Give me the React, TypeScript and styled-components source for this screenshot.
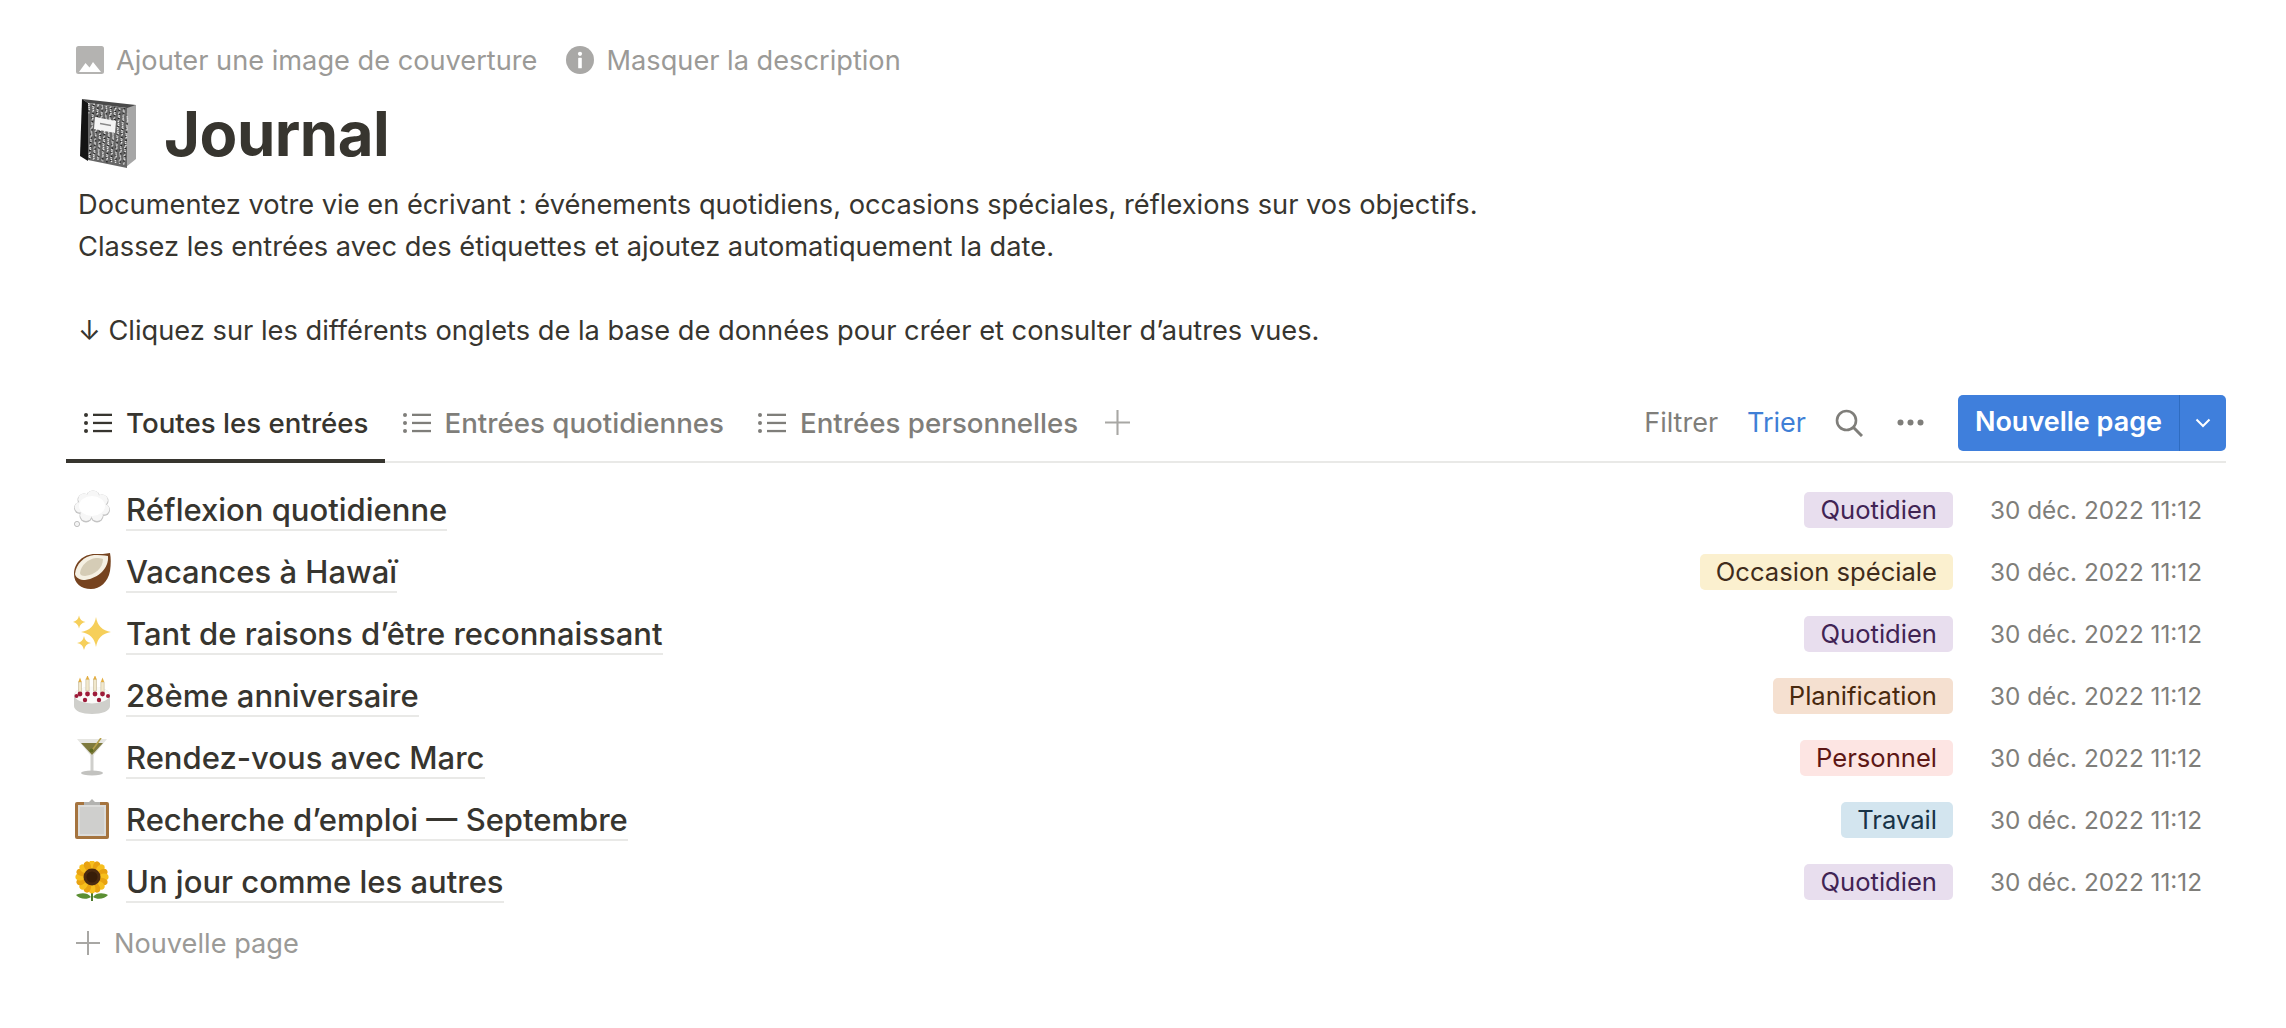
import React from "react";
import styled, { createGlobalStyle } from "styled-components";

const Global = createGlobalStyle`
  html, body { margin: 0; padding: 0; background: #fff; }
  body { font-family: Inter, "Liberation Sans", sans-serif; color: #37352f; }
`;

const Page = styled.div`
  width: 2286px;
  height: 1028px;
  box-sizing: border-box;
  padding: 38px 60px 0 66px;
  overflow: hidden;
`;
const Head = styled.header`
  padding-left: 10px;
`;
const TopActions = styled.div`
  display: flex;
  align-items: center;
  gap: 29px;
  height: 44px;
`;
const TopAction = styled.div`
  display: flex;
  align-items: center;
  gap: 12px;
  font-size: 27.2px;
  color: #9b9a97;
`;
const TitleRow = styled.div`
  display: flex;
  align-items: center;
  gap: 28px;
  height: 80px;
  margin-top: 12px;
`;
const NotebookSlot = styled.span`
  display: flex;
  margin-left: 4px;
`;
const Title = styled.h1`
  margin: 0;
  font-size: 61.7px;
  font-weight: 700;
  line-height: 80px;
  letter-spacing: -0.5px;
`;
const Description = styled.p`
  margin: 10px 0 0;
  padding-left: 2px;
  font-size: 27.25px;
  line-height: 42px;
  color: #37352f;
  white-space: pre-line;
`;
const Toolbar = styled.div`
  display: flex;
  align-items: stretch;
  justify-content: space-between;
  height: 70px;
  margin-top: 39px;
  border-bottom: 2px solid #e9e9e7;
`;
const Tabs = styled.div`
  display: flex;
  align-items: stretch;
`;
const Tab = styled.div<{ $active?: boolean }>`
  display: flex;
  align-items: center;
  gap: 14px;
  padding: 0 16px 4px 18px;
  margin-bottom: -2px;
  font-size: 27.7px;
  font-weight: 500;
  color: ${(p) => (p.$active ? "#37352f" : "#7f7e7a")};
  border-bottom: 4px solid ${(p) => (p.$active ? "#37352f" : "transparent")};
`;
const AddTab = styled.div`
  display: flex;
  align-items: center;
  margin-left: 11px;
  padding-bottom: 7px;
`;
const Tools = styled.div`
  display: flex;
  align-items: center;
  padding-bottom: 7px;
`;
const Tool = styled.span<{ $blue?: boolean }>`
  font-size: 27px;
  margin-right: 29px;
  color: ${(p) => (p.$blue ? "#3f7fd6" : "#7f7e7a")};
`;
const IconSlot = styled.span<{ $mr: number }>`
  display: flex;
  margin-right: ${(p) => p.$mr}px;
`;
const NewButton = styled.div`
  display: flex;
  height: 56px;
  width: 268px;
  border-radius: 5px;
  background: #3f7fdc;
  color: #fff;
  overflow: hidden;
`;
const NewLabel = styled.div`
  flex: 1;
  display: flex;
  align-items: center;
  justify-content: center;
  font-size: 27px;
  font-weight: 600;
  border-right: 1px solid #2f6cc0;
  padding-bottom: 2px;
`;
const NewChevron = styled.div`
  width: 46px;
  display: flex;
  align-items: center;
  justify-content: center;
`;
const List = styled.div`
  margin-top: 15px;
`;
const Row = styled.div`
  display: flex;
  align-items: center;
  height: 62px;
`;
const RowIcon = styled.span`
  width: 60px;
  display: flex;
  justify-content: center;
  padding-right: 14px;
  padding-left: 6px;
  box-sizing: border-box;
`;
const RowTitle = styled.span`
  font-size: 31px;
  font-weight: 500;
  line-height: 39px;
  color: #37352f;
  border-bottom: 2px solid #e9e9e7;
  margin-top: 3px;
`;
const Spacer = styled.span`
  flex: 1;
`;
const Tag = styled.span<{ $bg: string; $fg: string }>`
  height: 36px;
  line-height: 36px;
  margin-top: 1px;
  padding: 0 16px;
  border-radius: 5px;
  font-size: 25.6px;
  background: ${(p) => p.$bg};
  color: ${(p) => p.$fg};
`;
const DateText = styled.span`
  width: 211px;
  margin: 1px 25px 0 37px;
  font-size: 24.3px;
  color: #7f7e7a;
  white-space: nowrap;
`;
const AddRow = styled.div`
  display: flex;
  align-items: center;
  gap: 14px;
  height: 62px;
  padding-left: 10px;
  font-size: 27.2px;
  color: #9b9a97;
`;

const ListIcon = ({ color }: { color: string }) => (
  <svg width="28" height="22" viewBox="0 0 28 22" fill="none">
    <g fill={color}>
      <circle cx="2" cy="3" r="2" />
      <circle cx="2" cy="11" r="2" />
      <circle cx="2" cy="19" r="2" />
      <rect x="9" y="1.7" width="19" height="2.3" />
      <rect x="9" y="9.8" width="19" height="2.3" />
      <rect x="9" y="17.9" width="19" height="2.3" />
    </g>
  </svg>
);
const Plus = ({ size }: { size: number }) => (
  <svg width={size} height={size} viewBox="0 0 24 24">
    <path d="M12 0v24M0 12h24" stroke="#a8a7a4" strokeWidth="2" />
  </svg>
);
const ImageIcon = () => (
  <svg width="28" height="28" viewBox="0 0 28 28">
    <rect width="28" height="28" rx="2.5" fill="#b4b3b1" />
    <path d="M3 26l6.5-9 4 4.5 3.5-5.5L25 26z" fill="#fff" />
  </svg>
);
const InfoIcon = () => (
  <svg width="28" height="28" viewBox="0 0 28 28">
    <circle cx="14" cy="14" r="14" fill="#a9a8a6" />
    <circle cx="14" cy="7.8" r="2.1" fill="#fff" />
    <rect x="12.2" y="11.8" width="3.6" height="10.5" rx="0.6" fill="#fff" />
  </svg>
);
const SearchIcon = () => (
  <svg width="28" height="28" viewBox="0 0 28 28" fill="none" stroke="#7f7e7a" strokeWidth="2.6">
    <circle cx="11.5" cy="11.5" r="9.5" />
    <path d="M18.5 18.5L27 27" strokeWidth="3" />
  </svg>
);
const DotsIcon = () => (
  <svg width="27" height="7" viewBox="0 0 27 7" fill="#7f7e7a">
    <circle cx="3.5" cy="3.5" r="3" />
    <circle cx="13.5" cy="3.5" r="3" />
    <circle cx="23.5" cy="3.5" r="3" />
  </svg>
);
const Chevron = () => (
  <svg width="16" height="10" viewBox="0 0 16 10" fill="none" stroke="#fff" strokeWidth="2">
    <path d="M1.5 1.5L8 8l6.5-6.5" />
  </svg>
);

const speckles = Array.from({ length: 420 }, (_, i) => {
  const a = (i * 7919) % 211;
  const b = (i * 6151) % 197;
  const x = 8 + (a / 211) * 39;
  const y = 4 + (x - 8) * 0.13 + (b / 197) * 56;
  return { x, y, c: i % 2 === 0 ? "#e6e6e6" : i % 4 === 1 ? "#b0b0b0" : "#1e1e1e" };
});
const NotebookEmoji = () => (
  <svg width="56" height="70" viewBox="0 0 56 70">
    <path d="M46 8L56 6v54L46 68z" fill="#a6a6a6" />
    <path d="M2 0l54 6-9 3L8 4z" fill="#4a4a4a" />
    <path d="M2 0l6 4v58L0 57z" fill="#141414" />
    <path d="M8 4l39 5v60L8 61z" fill="#666" />
    {speckles.map((s, i) => (
      <rect key={i} x={s.x} y={s.y} width="1.5" height="1.3" fill={s.c} />
    ))}
    <path d="M15 18l21 4-1 12-21-4z" fill="#f4f4f4" />
    <path d="M20 24.5l11 2" stroke="#8a8a8a" strokeWidth="1.3" />
  </svg>
);
const cloudLobes: [number, number, number][] = [
  [11, 10, 6.5],
  [20, 7.5, 7],
  [29, 11, 6.5],
  [31, 20, 6],
  [24, 26, 6.5],
  [13, 26, 6.5],
  [7, 18, 6],
];
const CloudEmoji = () => (
  <svg width="38" height="38" viewBox="0 0 38 38">
    {cloudLobes.map(([x, y, r]) => (
      <circle key={`o${x}`} cx={x} cy={y} r={r} fill="#c4c4c4" />
    ))}
    {cloudLobes.map(([x, y, r]) => (
      <circle key={`i${x}`} cx={x} cy={y - 0.8} r={r - 0.7} fill="#f7f7f7" />
    ))}
    <ellipse cx="19" cy="16" rx="13" ry="10" fill="#fff" />
    <circle cx="4" cy="34" r="2.6" fill="#f4f4f4" stroke="#b0b0b0" strokeWidth="0.8" />
  </svg>
);
const CoconutEmoji = () => (
  <svg width="38" height="38" viewBox="0 0 38 38">
    <path d="M37 1C38 6 38 12 37 19 35 30 27 37 18 37 8 37 1 31 1 22 1 11 10 2 22 2c5 0 11 0 15-1z" fill="#76431f" />
    <path d="M35 4c1 12-9 22-23 24C7 28 3 26 2 22 3 12 11 4 21 3c5 0 10 0 14 1z" fill="#f5f0e3" />
    <path d="M30 7C30 16 22 23 12 24 9 24 7 23 7 21 8 13 15 7 23 6c3 0 5 0 7 1z" fill="#d5ccb6" />
  </svg>
);
const Star = ({ x, y, r, s }: { x: number; y: number; r: number; s: number }) => (
  <path
    d={`M${x} ${y - r}Q${x + s} ${y - s} ${x + r} ${y}Q${x + s} ${y + s} ${x} ${y + r}Q${x - s} ${y + s} ${x - r} ${y}Q${x - s} ${y - s} ${x} ${y - r}z`}
    fill="#f6cf5a"
  />
);
const SparklesEmoji = () => (
  <svg width="38" height="38" viewBox="0 0 38 38">
    <Star x={23} y={18} r={15} s={2} />
    <Star x={6} y={8} r={6.5} s={1} />
    <Star x={11} y={29} r={7} s={1} />
  </svg>
);
const CakeEmoji = () => (
  <svg width="38" height="38" viewBox="0 0 38 38">
    <path d="M1 20c0-6 8-9 18-9s18 3 18 9v10c0 5-8 8-18 8S1 35 1 30z" fill="#cfcfcb" />
    <ellipse cx="19" cy="19" rx="17.5" ry="8.5" fill="#fafaf8" />
    {[7, 14.5, 22, 29.5].map((x, i) => (
      <g key={x}>
        <rect x={x - 1.6} y={i % 3 === 0 ? 6 : 3} width="3.2" height="12" fill="#f1e8cd" stroke="#b9ac8a" strokeWidth="0.5" />
        <path d={`M${x} ${i % 3 === 0 ? 1.5 : -1}l1.7 4.5h-3.4z`} fill="#e4ad3e" />
        <circle cx={x} cy="18" r="2.4" fill="#9e1b39" />
      </g>
    ))}
    <circle cx="3.5" cy="20" r="2" fill="#9e1b39" />
    <circle cx="35" cy="20" r="2" fill="#9e1b39" />
    <circle cx="12" cy="24" r="2.2" fill="#9e1b39" />
    <circle cx="26" cy="24" r="2.2" fill="#9e1b39" />
  </svg>
);
const CocktailEmoji = () => (
  <svg width="32" height="38" viewBox="0 0 32 38">
    <path d="M1 1h30L17 18v15h-2V18z" fill="#e6e6e2" />
    <path d="M5 5h22L16 17z" fill="#7e7a3e" />
    <path d="M25 0L15 14" stroke="#b5a04a" strokeWidth="1.6" />
    <circle cx="15.5" cy="12.5" r="2" fill="#5f6b22" />
    <rect x="14.5" y="17" width="3" height="17" fill="#cfcfcc" />
    <ellipse cx="16" cy="35" rx="11" ry="2.4" fill="#c2c2bf" />
  </svg>
);
const ClipboardEmoji = () => (
  <svg width="36" height="40" viewBox="0 0 36 40">
    <rect x="1" y="3" width="34" height="37" rx="2" fill="#a5743f" />
    <rect x="4" y="6" width="28" height="31" fill="#dcdcda" />
    <rect x="6" y="8" width="24" height="27" fill="#cfcfcd" />
    <path d="M10 6V3h5l3-3 3 3h5v3z" fill="#b3b3b0" />
  </svg>
);
const petals = Array.from({ length: 16 }, (_, i) => i * 22.5);
const SunflowerEmoji = () => (
  <svg width="34" height="40" viewBox="0 0 34 40">
    <path d="M16 28h2v12h-2z" fill="#4c7c2b" />
    <path d="M16 36C12 31 5 32 1 34c3 4 11 5 15 2zM18 36c4-5 11-4 15-2-3 4-11 5-15 2z" fill="#5b8f33" />
    {petals.map((a) => (
      <ellipse key={a} cx="17" cy="4" rx="3.4" ry="4.6" fill={a % 45 === 0 ? "#f7bf1d" : "#e8a210"} transform={`rotate(${a} 17 16)`} />
    ))}
    <circle cx="17" cy="16" r="8.5" fill="#4a2a10" />
    <circle cx="17" cy="16" r="5.5" fill="#371d08" />
  </svg>
);

const purple = { bg: "#e8deee", fg: "#412454" };
const rows = [
  { icon: <CloudEmoji />, title: "Réflexion quotidienne", tag: "Quotidien", ...purple },
  { icon: <CoconutEmoji />, title: "Vacances à Hawaï", tag: "Occasion spéciale", bg: "#fbf0cf", fg: "#402c1b" },
  { icon: <SparklesEmoji />, title: "Tant de raisons d’être reconnaissant", tag: "Quotidien", ...purple },
  { icon: <CakeEmoji />, title: "28ème anniversaire", tag: "Planification", bg: "#f5e0d0", fg: "#49290e" },
  { icon: <CocktailEmoji />, title: "Rendez-vous avec Marc", tag: "Personnel", bg: "#fde5e3", fg: "#5d1715" },
  { icon: <ClipboardEmoji />, title: "Recherche d’emploi — Septembre", tag: "Travail", bg: "#d3e5ef", fg: "#183347" },
  { icon: <SunflowerEmoji />, title: "Un jour comme les autres", tag: "Quotidien", ...purple },
];

export default function App() {
  return (
    <Page>
      <Global />
      <Head>
        <TopActions>
          <TopAction>
            <ImageIcon />
            Ajouter une image de couverture
          </TopAction>
          <TopAction>
            <InfoIcon />
            Masquer la description
          </TopAction>
        </TopActions>
        <TitleRow>
          <NotebookSlot>
            <NotebookEmoji />
          </NotebookSlot>
          <Title>Journal</Title>
        </TitleRow>
        <Description>
          {"Documentez votre vie en écrivant : événements quotidiens, occasions spéciales, réflexions sur vos objectifs.\nClassez les entrées avec des étiquettes et ajoutez automatiquement la date.\n\n↓ Cliquez sur les différents onglets de la base de données pour créer et consulter d’autres vues."}
        </Description>
      </Head>
      <Toolbar>
        <Tabs>
          <Tab $active>
            <ListIcon color="#37352f" />
            Toutes les entrées
          </Tab>
          <Tab>
            <ListIcon color="#7f7e7a" />
            Entrées quotidiennes
          </Tab>
          <Tab>
            <ListIcon color="#7f7e7a" />
            Entrées personnelles
          </Tab>
          <AddTab>
            <Plus size={25} />
          </AddTab>
        </Tabs>
        <Tools>
          <Tool>Filtrer</Tool>
          <Tool $blue>Trier</Tool>
          <IconSlot $mr={34}>
            <SearchIcon />
          </IconSlot>
          <IconSlot $mr={34}>
            <DotsIcon />
          </IconSlot>
          <NewButton>
            <NewLabel>Nouvelle page</NewLabel>
            <NewChevron>
              <Chevron />
            </NewChevron>
          </NewButton>
        </Tools>
      </Toolbar>
      <List>
        {rows.map((r) => (
          <Row key={r.title}>
            <RowIcon>{r.icon}</RowIcon>
            <RowTitle>{r.title}</RowTitle>
            <Spacer />
            <Tag $bg={r.bg} $fg={r.fg}>
              {r.tag}
            </Tag>
            <DateText>30 déc. 2022 11:12</DateText>
          </Row>
        ))}
        <AddRow>
          <Plus size={24} />
          Nouvelle page
        </AddRow>
      </List>
    </Page>
  );
}
